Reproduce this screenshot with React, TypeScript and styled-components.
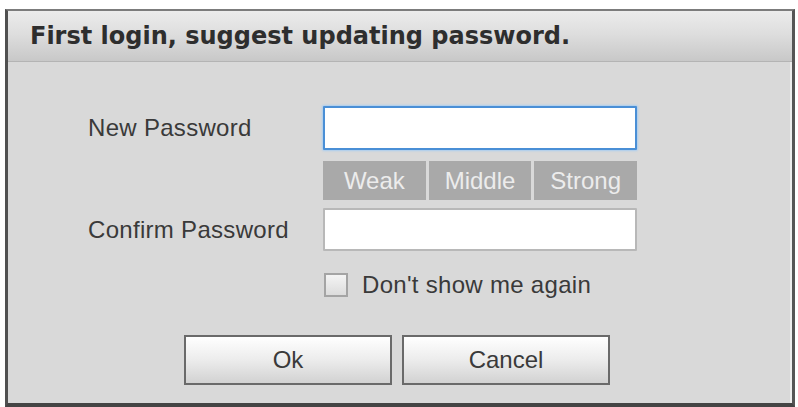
import React from "react";
import styled, { createGlobalStyle } from "styled-components";

const Global = createGlobalStyle`
  html, body { margin: 0; padding: 0; background: #ffffff; }
  body { font-family: "Liberation Sans", Arial, sans-serif; }
`;

const Dialog = styled.div`
  box-sizing: border-box;
  margin: 9px 0 0 5px;
  width: 790px;
  height: 398px;
  background: #d9d9d9;
  border-top: 2px solid #7c7c7c;
  border-left: 3px solid #505050;
  border-right: 3px solid #555555;
  border-bottom: 4px solid #444444;
  box-shadow: inset -3px 0 0 -1px #ececec;
  display: flex;
  flex-direction: column;
`;

const Header = styled.div`
  box-sizing: border-box;
  height: 51px;
  padding-left: 22px;
  display: flex;
  align-items: center;
  background: linear-gradient(#ececec 0%, #dedede 45%, #c8c8c8 100%);
  border-bottom: 1px solid #b4b4b4;
  font-family: "DejaVu Sans", Verdana, sans-serif;
  font-weight: bold;
  font-size: 24px;
  color: #2e2e2e;
`;

const Form = styled.div`
  display: grid;
  grid-template-columns: 235px 314px;
  grid-template-rows: 44px auto 43px;
  padding: 44px 0 0 80px;
  align-items: center;
`;

const Label = styled.div`
  font-size: 24px;
  color: #3a3a3a;
  letter-spacing: 0.3px;
`;

const Input = styled.input<{ $focused?: boolean }>`
  box-sizing: border-box;
  width: 314px;
  height: 100%;
  margin: 0;
  background: #ffffff;
  border: 2px solid ${(p) => (p.$focused ? "#4a8fd6" : "#b8b8b8")};
  box-shadow: ${(p) => (p.$focused ? "0 0 2px 1px #a9cdf0" : "none")};
  outline: none;
  border-radius: 1px;
`;

const Strength = styled.div`
  grid-column: 2;
  display: flex;
  gap: 3px;
  height: 39px;
  margin: 11px 0 8px;
`;

const Level = styled.div`
  flex: 1;
  background: #a9a9a9;
  color: #ececec;
  font-size: 24px;
  display: flex;
  align-items: center;
  justify-content: center;
`;

const CheckRow = styled.label`
  display: flex;
  align-items: center;
  height: 28px;
  gap: 14px;
  margin: 20px 0 0 316px;
  font-size: 24px;
  letter-spacing: 0.3px;
  color: #3a3a3a;
`;

const Box = styled.span`
  box-sizing: border-box;
  width: 24px;
  height: 24px;
  border: 2px solid #a4a4a4;
  background: linear-gradient(#f4f4f4, #dcdcdc);
`;

const Buttons = styled.div`
  display: flex;
  gap: 10px;
  margin: 36px 0 0 176px;
`;

const Button = styled.button`
  box-sizing: border-box;
  width: 208px;
  height: 50px;
  border: 2px solid #6a6a6a;
  background: linear-gradient(#ffffff 0%, #ececec 50%, #d2d2d2 100%);
  font-family: "Liberation Sans", Arial, sans-serif;
  font-size: 24px;
  color: #3a3a3a;
  padding: 0;
`;

export default function App() {
  return (
    <>
      <Global />
      <Dialog>
        <Header>First login, suggest updating password.</Header>
        <Form>
          <Label>New Password</Label>
          <Input type="password" $focused />
          <Strength>
            <Level>Weak</Level>
            <Level>Middle</Level>
            <Level>Strong</Level>
          </Strength>
          <Label>Confirm Password</Label>
          <Input type="password" />
        </Form>
        <CheckRow>
          <Box />
          Don't show me again
        </CheckRow>
        <Buttons>
          <Button>Ok</Button>
          <Button>Cancel</Button>
        </Buttons>
      </Dialog>
    </>
  );
}
